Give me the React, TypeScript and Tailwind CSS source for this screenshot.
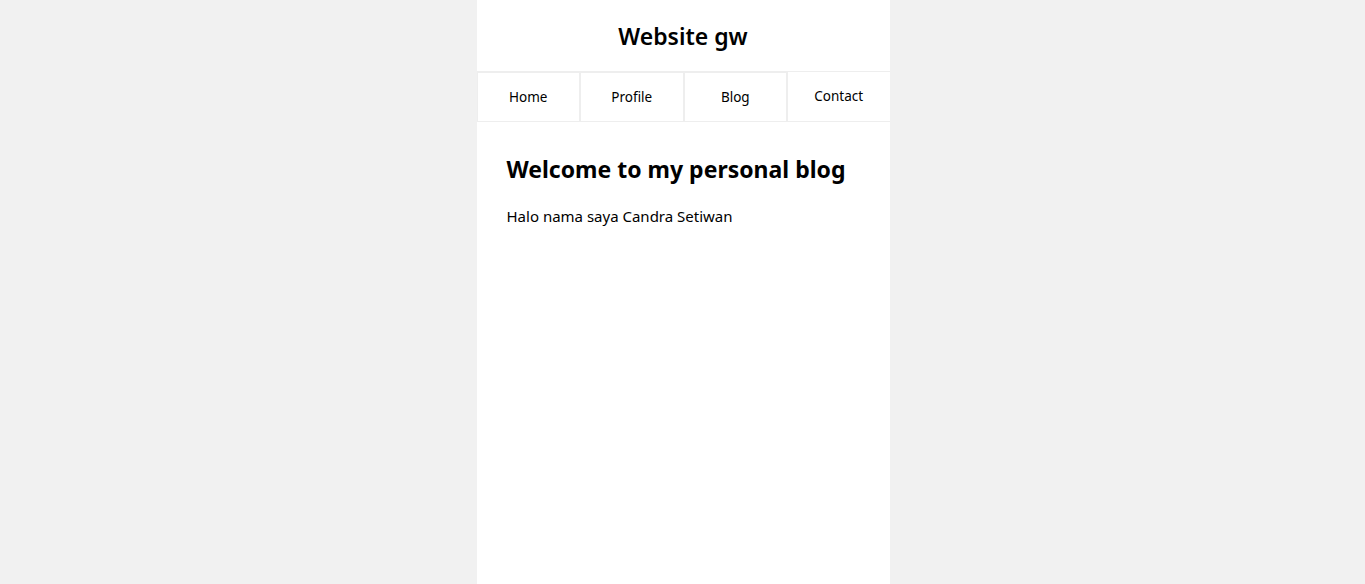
export default function App() {
  const links = ["Home", "Profile", "Blog", "Contact"];

  return (
    <div className="flex min-h-screen justify-center bg-[#f1f1f1] pl-px font-['Noto_Sans',sans-serif] text-black">
      <div className="min-h-screen w-[413px] bg-white">
        {/* Header */}
        <header className="flex h-[72px] items-center justify-center border-b border-[#eeeeee] pt-[2px]">
          <h1 className="text-[23px] font-semibold">Website gw</h1>
        </header>

        {/* Nav */}
        <nav className="flex">
          {links.map((link, i) => (
            <a
              key={link}
              href="#"
              className={
                i === links.length - 1
                  ? "flex h-[50px] flex-1 items-center justify-center border-b border-l border-[#eeeeee] pb-px text-[13.5px]"
                  : "flex h-[50px] flex-1 items-center justify-center border border-[#eeeeee] text-[13.5px]"
              }
            >
              {link}
            </a>
          ))}
        </nav>

        {/* Content */}
        <main className="px-[30px] pt-[33px]">
          <h2 className="text-[23px] font-bold leading-tight">Welcome to my personal blog</h2>
          <p className="mt-[21px] text-[15px]">Halo nama saya Candra Setiwan</p>
        </main>
      </div>
    </div>
  );
}
